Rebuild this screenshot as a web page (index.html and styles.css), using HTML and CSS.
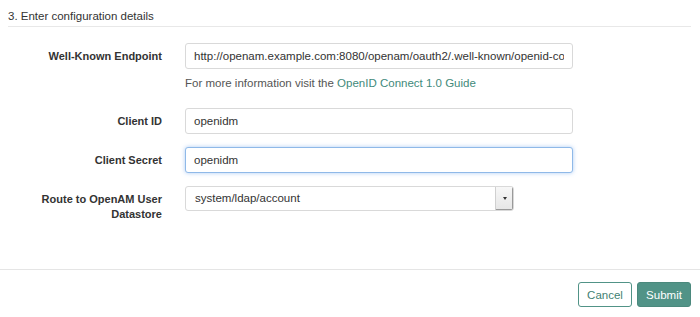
FILE: index.html
```html
<!DOCTYPE html>
<html>
<head>
<meta charset="utf-8">
<link rel="stylesheet" href="styles.css">
</head>
<body>
<div class="panel">
  <div class="panel-body">
    <h4 class="step-title">3. Enter configuration details</h4>
    <form class="form">
      <div class="form-row">
        <label class="form-label">Well-Known Endpoint</label>
        <div class="form-field">
          <input class="text-input wide" type="text" value="http://openam.example.com:8080/openam/oauth2/.well-known/openid-configuration">
          <p class="help">For more information visit the <a class="link" href="#">OpenID Connect 1.0 Guide</a></p>
        </div>
      </div>
      <div class="form-row">
        <label class="form-label">Client ID</label>
        <div class="form-field">
          <input class="text-input wide" type="text" value="openidm">
        </div>
      </div>
      <div class="form-row">
        <label class="form-label">Client Secret</label>
        <div class="form-field">
          <input class="text-input wide focused" type="text" value="openidm">
        </div>
      </div>
      <div class="form-row">
        <label class="form-label">Route to OpenAM User Datastore</label>
        <div class="form-field">
          <div class="select">
            <span class="select-value">system/ldap/account</span>
            <span class="select-btn"><span class="caret"></span></span>
          </div>
        </div>
      </div>
    </form>
  </div>
  <div class="panel-footer">
    <button class="btn btn-default" type="button">Cancel</button>
    <button class="btn btn-primary" type="button">Submit</button>
  </div>
</div>
</body>
</html>
```

FILE: styles.css
```css
html, body {
  margin: 0;
  padding: 0;
  background: #fff;
}
body {
  font-family: "Liberation Sans", Arial, sans-serif;
  font-size: 11.5px;
  color: #333;
  width: 700px;
  height: 317px;
  overflow: hidden;
}
.panel-body {
  padding: 8px 9px 0 8px;
  height: 269px;
  box-sizing: border-box;
}
.step-title {
  margin: 0;
  font-size: 11.5px;
  font-weight: normal;
  line-height: 17px;
  padding-bottom: 1px;
  border-bottom: 1px solid #e8e8e8;
}
.form {
  padding-top: 16px;
}
.form-row {
  display: grid;
  grid-template-columns: 154px 388px;
  column-gap: 23px;
  margin-bottom: 13px;
}
.form-label {
  text-align: right;
  font-weight: bold;
  font-size: 11px;
  line-height: 15px;
  padding-top: 6px;
}
.text-input {
  display: block;
  box-sizing: border-box;
  width: 388px;
  height: 26px;
  margin: 0;
  padding: 0 8px;
  border: 1px solid #d9d9d9;
  border-radius: 3px;
  font-family: inherit;
  font-size: 11.5px;
  color: #333;
  background: #fff;
  outline: none;
}
.text-input.focused {
  border-color: #8fb9e8;
  box-shadow: 0 0 4px rgba(102, 160, 233, 0.55);
}
.help {
  margin: 7px 0 4px;
  line-height: 15px;
  color: #555;
}
.link {
  color: #3f8a7b;
  text-decoration: none;
}
.select {
  display: flex;
  width: 329px;
  height: 25px;
  box-sizing: border-box;
  border: 1px solid #d9d9d9;
  border-radius: 3px;
  overflow: hidden;
}
.select-value {
  flex: 1;
  padding-left: 9px;
  line-height: 23px;
}
.select-btn {
  width: 17px;
  background: linear-gradient(#f7f7f7, #e6e6e6);
  border-left: 1px solid #d0d0d0;
  box-shadow: inset -1px -1px 0 #9a9a9a;
  display: flex;
  align-items: center;
  justify-content: center;
}
.caret {
  width: 0;
  height: 0;
  border-left: 2.5px solid transparent;
  border-right: 2.5px solid transparent;
  border-top: 3px solid #333;
}
.panel-footer {
  border-top: 1px solid #e5e5e5;
  padding: 12px 9px 0 0;
  display: flex;
  justify-content: flex-end;
  gap: 5px;
}
.btn {
  height: 25px;
  width: 54px;
  border-radius: 3px;
  font-family: inherit;
  font-size: 11.5px;
  padding: 0;
  cursor: pointer;
}
.btn-default {
  background: #fff;
  border: 1px solid #519387;
  color: #3f7f73;
}
.btn-primary {
  background: #519387;
  border: 1px solid #4b897d;
  color: #fff;
}
```
